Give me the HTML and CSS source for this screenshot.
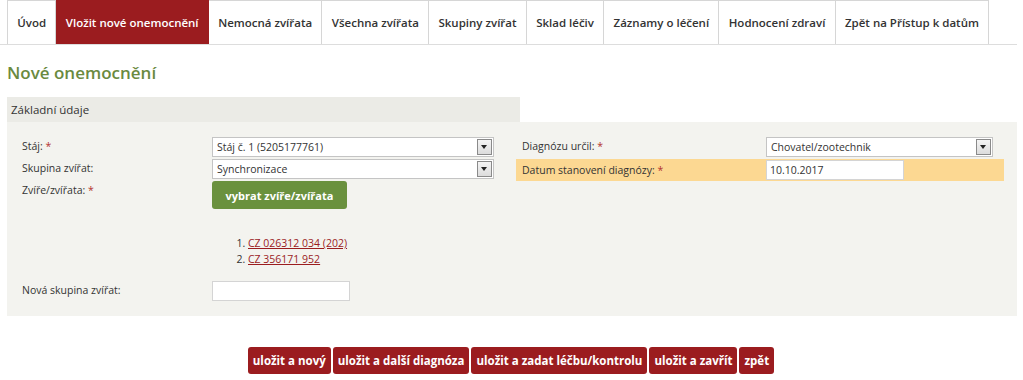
FILE: index.html
```html
<!DOCTYPE html>
<html lang="cs">
<head>
    <meta charset="UTF-8">
    <title>Nové onemocnění</title>
    <link rel="stylesheet" href="styles.css">
</head>
<body>
    <nav class="tabs">
        <a href="#">Úvod</a>
        <a href="#" class="active">Vložit nové onemocnění</a>
        <a href="#">Nemocná zvířata</a>
        <a href="#">Všechna zvířata</a>
        <a href="#">Skupiny zvířat</a>
        <a href="#">Sklad léčiv</a>
        <a href="#">Záznamy o léčení</a>
        <a href="#">Hodnocení zdraví</a>
        <a href="#">Zpět na Přístup k datům</a>
    </nav>

    <h1 class="page-title">Nové onemocnění</h1>

    <div class="box-head">Základní údaje</div>
    <div class="box">
        <div class="col">
            <div class="row">
                <label>Stáj: <span class="req">*</span></label>
                <div class="select">Stáj č. 1 (5205177761)<span class="arrow"></span></div>
            </div>
            <div class="row">
                <label>Skupina zvířat:</label>
                <div class="select">Synchronizace<span class="arrow"></span></div>
            </div>
            <div class="row">
                <label>Zvíře/zvířata: <span class="req">*</span></label>
                <div>
                    <button class="btn-green">vybrat zvíře/zvířata</button>
                    <ol class="animals">
                        <li><a href="#">CZ 026312 034 (202)</a></li>
                        <li><a href="#">CZ 356171 952</a></li>
                    </ol>
                </div>
            </div>
            <div class="row">
                <label>Nová skupina zvířat:</label>
                <input type="text" class="input">
            </div>
        </div>
        <div class="col right">
            <div class="row">
                <label>Diagnózu určil: <span class="req">*</span></label>
                <div class="select wide">Chovatel/zootechnik<span class="arrow"></span></div>
            </div>
            <div class="row hl">
                <label>Datum stanovení diagnózy: <span class="req">*</span></label>
                <input type="text" class="input" value="10.10.2017">
            </div>
        </div>
    </div>

    <div class="actions">
        <button>uložit a nový</button>
        <button>uložit a další diagnóza</button>
        <button>uložit a zadat léčbu/kontrolu</button>
        <button>uložit a zavřít</button>
        <button>zpět</button>
    </div>
</body>
</html>
```

FILE: styles.css
```css
body {
    font-family: "Open Sans", "DejaVu Sans", sans-serif;
    font-size: 10.5px;
    color: #333;
    background-color: #fff;
    margin: 0;
    padding: 0 6px 0 7px;
}

/* horni menu */
.tabs {
    display: flex;
    height: 44px;
    border-bottom: 1px solid #ddd;
    margin-left: -7px;
    padding-left: 7px;
}

.tabs a {
    display: flex;
    align-items: center;
    flex-shrink: 0;
    white-space: nowrap;
    padding: 0 9.3px;
    border: 1px solid #d6d6d6;
    border-left: none;
    border-bottom: none;
    color: #333;
    font-size: 11.5px;
    font-weight: 600;
    text-decoration: none;
}

.tabs a:first-child {
    border-left: 1px solid #d6d6d6;
}

.tabs a.active {
    background-color: #9b1c1f;
    border-color: #9b1c1f;
    color: #fff;
}

.page-title {
    margin: 16px 0 13px 0;
    font-size: 17px;
    font-weight: 600;
    color: #6a8a3f;
}

.box-head {
    width: 509px;
    height: 25px;
    line-height: 25px;
    padding-left: 4px;
    background-color: #ebebe6;
    font-size: 11.5px;
}

.box {
    display: flex;
    background-color: #f3f3ef;
    padding: 15px 13px 13px 15px;
    min-height: 166px;
}

.col {
    flex-shrink: 0;
    width: 479px;
}

.col.right {
    width: 488px;
    padding-left: 15px;
}

.row {
    display: flex;
    align-items: flex-start;
    min-height: 22px;
}

.row label {
    width: 190px;
    flex-shrink: 0;
    padding-top: 2px;
}

.right .row {
    padding-left: 6px;
    width: 482px;
}

.right .row label {
    width: 244px;
}

.row.hl {
    background-color: #fcd892;
    height: 22px;
    align-items: center;
}

.row.hl label {
    padding-top: 0;
}

.req {
    color: #b3312e;
}

.select {
    position: relative;
    flex-shrink: 0;
    width: 276px;
    height: 18px;
    line-height: 18px;
    padding-left: 4px;
    background-color: #fff;
    border: 1px solid #c4c4c4;
}

.select.wide {
    width: 221px;
}

.arrow {
    position: absolute;
    right: 1px;
    top: 1px;
    width: 13px;
    height: 14px;
    border: 1px solid #8a8a8a;
    background: linear-gradient(#f4f4f4, #dcdcdc);
}

.arrow::after {
    content: "";
    position: absolute;
    left: 3px;
    top: 5px;
    border-left: 3px solid transparent;
    border-right: 3px solid transparent;
    border-top: 4px solid #222;
}

.btn-green {
    margin-top: 0;
    width: 135px;
    height: 28px;
    background-color: #6a913e;
    color: #fff;
    border: none;
    border-radius: 3px;
    font-family: inherit;
    font-size: 11px;
    font-weight: 700;
}

.animals {
    margin: 26px 0 14px 0;
    padding-left: 36px;
    line-height: 16px;
}

.animals a {
    color: #9b1c1f;
}

.input {
    flex-shrink: 0;
    width: 130px;
    height: 14px;
    padding: 2px 3px;
    border: 1px solid #d4d4d4;
    background-color: #fff;
    font-family: inherit;
    font-size: 10.5px;
    color: #333;
}

.actions {
    display: flex;
    justify-content: center;
    gap: 2px;
    margin-top: 31px;
    padding-right: 2px;
}

.actions button {
    height: 27px;
    padding: 0 5px;
    background-color: #9b1c1f;
    color: #fff;
    border: none;
    border-radius: 3px;
    font-family: inherit;
    font-size: 11.5px;
    font-weight: 700;
}
```
